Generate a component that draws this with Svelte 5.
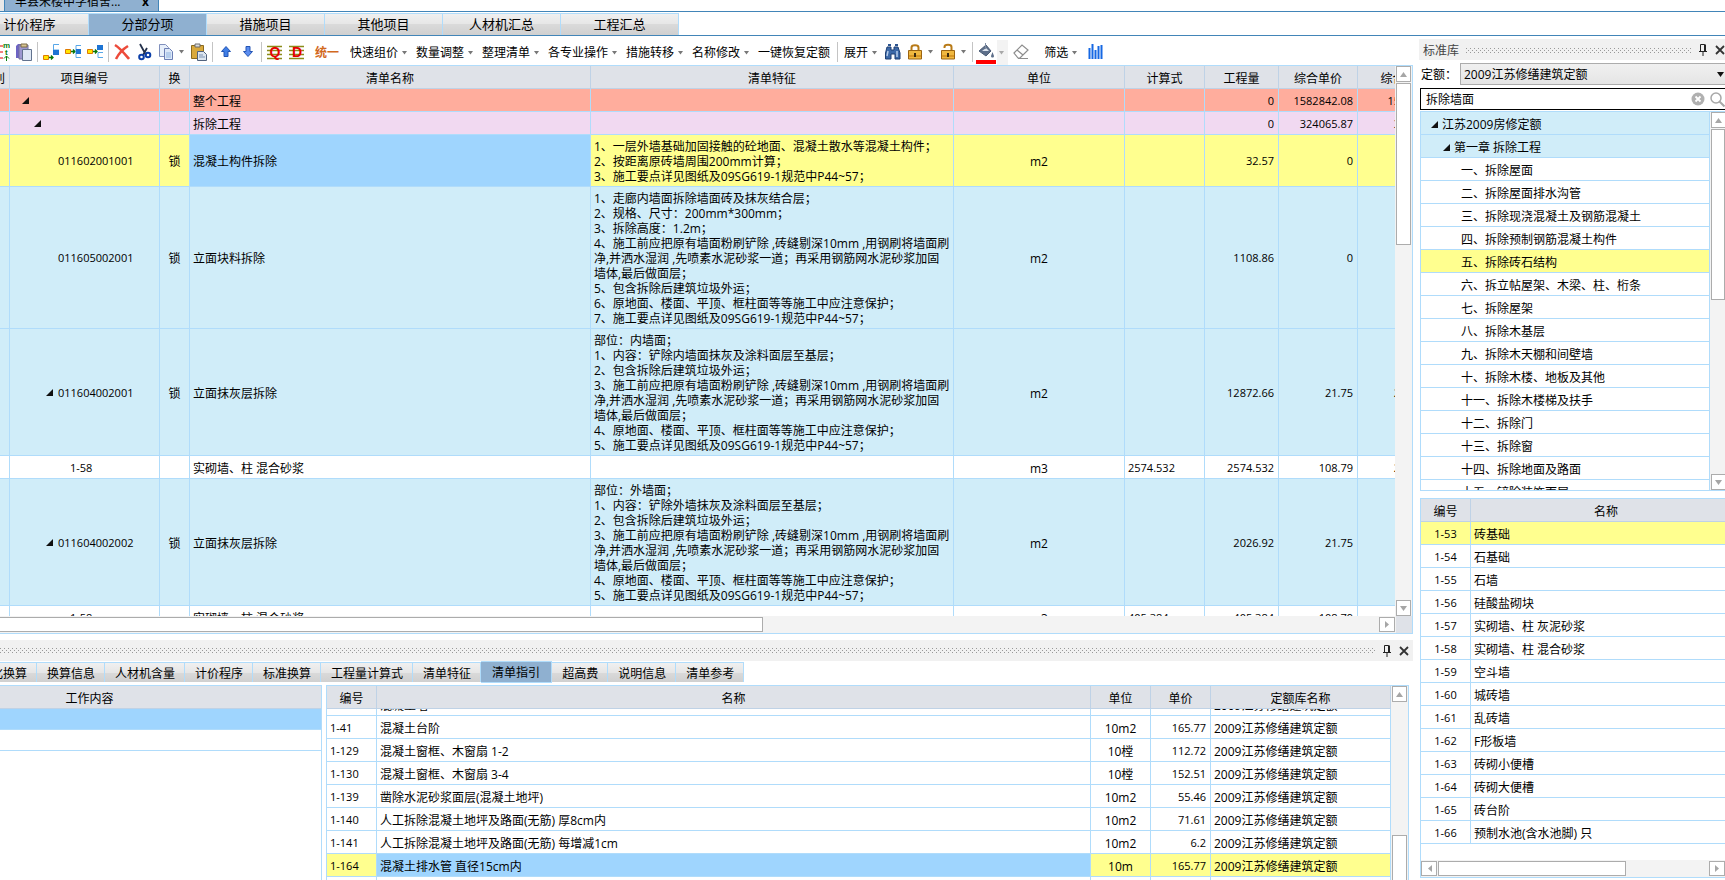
<script>
    let activeTab = $state("分部分项");
    let activeSub = $state("清单指引");
    let search = $state("拆除墙面");
    let quota = $state("2009江苏修缮建筑定额");

    const tabs = ["计价程序", "分部分项", "措施项目", "其他项目", "人材机汇总", "工程汇总"];
    const subTabs = ["优化换算", "换算信息", "人材机含量", "计价程序", "标准换算", "工程量计算式", "清单特征", "清单指引", "超高费", "说明信息", "清单参考"];

    const columns = ["类别", "项目编号", "换", "清单名称", "清单特征", "单位", "计算式", "工程量", "综合单价", "综合合价"];

    const wallSteps = (n) => `${n}、施工前应把原有墙面粉刷铲除 ,砖缝剔深10mm ,用钢刷将墙面刷
净,并洒水湿润 ,先喷素水泥砂浆一道；再采用钢筋网水泥砂浆加固
墙体,最后做面层；`;

    const rows = [
        { kind: "total", level: 0, open: true, code: "", lock: "", name: "整个工程", desc: "", unit: "", expr: "", qty: "0", price: "1582842.08", sum: "1582842.08" },
        { kind: "section", level: 1, open: true, code: "", lock: "", name: "拆除工程", desc: "", unit: "", expr: "", qty: "0", price: "324065.87", sum: "324065.87" },
        {
            kind: "current", level: 2, code: "011602001001", lock: "锁", name: "混凝土构件拆除",
            desc: `1、一层外墙基础加固接触的砼地面、混凝土散水等混凝土构件；
2、按距离原砖墙周围200mm计算；
3、施工要点详见图纸及09SG619-1规范中P44~57；`,
            unit: "m2", expr: "", qty: "32.57", price: "0", sum: "0",
        },
        {
            kind: "item", level: 2, code: "011605002001", lock: "锁", name: "立面块料拆除",
            desc: `1、走廊内墙面拆除墙面砖及抹灰结合层；
2、规格、尺寸：200mm*300mm；
3、拆除高度：1.2m；
${wallSteps(4)}
5、包含拆除后建筑垃圾外运；
6、原地面、楼面、平顶、框柱面等等施工中应注意保护；
7、施工要点详见图纸及09SG619-1规范中P44~57；`,
            unit: "m2", expr: "", qty: "1108.86", price: "0", sum: "0",
        },
        {
            kind: "item", level: 2, open: true, code: "011604002001", lock: "锁", name: "立面抹灰层拆除",
            desc: `部位：内墙面；
1、内容：铲除内墙面抹灰及涂料面层至基层；
2、包含拆除后建筑垃圾外运；
${wallSteps(3)}
4、原地面、楼面、平顶、框柱面等等施工中应注意保护；
5、施工要点详见图纸及09SG619-1规范中P44~57；`,
            unit: "m2", expr: "", qty: "12872.66", price: "21.75", sum: "279980.36",
        },
        { kind: "quota", level: 3, code: "1-58", lock: "", name: "实砌墙、柱 混合砂浆", desc: "", unit: "m3", expr: "2574.532", qty: "2574.532", price: "108.79", sum: "280083.34" },
        {
            kind: "item", level: 2, open: true, code: "011604002002", lock: "锁", name: "立面抹灰层拆除",
            desc: `部位：外墙面；
1、内容：铲除外墙抹灰及涂料面层至基层；
2、包含拆除后建筑垃圾外运；
${wallSteps(3)}
4、原地面、楼面、平顶、框柱面等等施工中应注意保护；
5、施工要点详见图纸及09SG619-1规范中P44~57；`,
            unit: "m2", expr: "", qty: "2026.92", price: "21.75", sum: "44085.51",
        },
        { kind: "quota", level: 3, code: "1-58", lock: "", name: "实砌墙、柱 混合砂浆", desc: "", unit: "m3", expr: "405.384", qty: "405.384", price: "108.79", sum: "44101.73" },
    ];

    const lib = "2009江苏修缮建筑定额";
    const guide = [
        ["", "混凝土墙", "", "", lib],
        ["1-41", "混凝土台阶", "10m2", "165.77", lib],
        ["1-129", "混凝土窗框、木窗扇 1-2", "10樘", "112.72", lib],
        ["1-130", "混凝土窗框、木窗扇 3-4", "10樘", "152.51", lib],
        ["1-139", "凿除水泥砂浆面层(混凝土地坪)", "10m2", "55.46", lib],
        ["1-140", "人工拆除混凝土地坪及路面(无筋) 厚8cm内", "10m2", "71.61", lib],
        ["1-141", "人工拆除混凝土地坪及路面(无筋) 每增减1cm", "10m2", "6.2", lib],
        ["1-164", "混凝土排水管 直径15cm内", "10m", "165.77", lib],
        ["", "", "", "", ""],
    ];

    const tree = [
        "一、拆除屋面", "二、拆除屋面排水沟管", "三、拆除现浇混凝土及钢筋混凝土",
        "四、拆除预制钢筋混凝土构件", "五、拆除砖石结构", "六、拆立帖屋架、木梁、柱、桁条",
        "七、拆除屋架", "八、拆除木基层", "九、拆除木天棚和间壁墙", "十、拆除木楼、地板及其他",
        "十一、拆除木楼梯及扶手", "十二、拆除门", "十三、拆除窗", "十四、拆除地面及路面",
        "十五、铲除装饰面层",
    ];
    let chapter = $state("五、拆除砖石结构");

    const quotas = [
        ["1-53", "砖基础"], ["1-54", "石基础"], ["1-55", "石墙"], ["1-56", "硅酸盐砌块"],
        ["1-57", "实砌墙、柱 灰泥砂浆"], ["1-58", "实砌墙、柱 混合砂浆"], ["1-59", "空斗墙"],
        ["1-60", "城砖墙"], ["1-61", "乱砖墙"], ["1-62", "F形板墙"], ["1-63", "砖砌小便槽"],
        ["1-64", "砖砌大便槽"], ["1-65", "砖台阶"], ["1-66", "预制水池(含水池脚) 只"],
    ];
    let quotaCode = $state("1-53");

    const menus = ["快速组价", "数量调整", "整理清单", "各专业操作", "措施转移", "名称修改"];
</script>

{#snippet tri()}
    <svg class="tri" width="7" height="7" viewBox="0 0 7 7"><path d="M7 0v7H0z" fill="#111" /></svg>
{/snippet}

{#snippet caret()}
    <svg class="caret" width="5" height="4" viewBox="0 0 5 4"><path d="M0 0h5L2.5 3.5z" fill="#777" /></svg>
{/snippet}

{#snippet scrollBtn(dir)}
    <button class="sb-btn" aria-label={dir}>
        <svg width="7" height="7" viewBox="0 0 7 7" fill="#a6a6a6">
            {#if dir === "up"}<path d="M0 6h7L3.5 1z" />
            {:else if dir === "down"}<path d="M0 1h7L3.5 6z" />
            {:else if dir === "left"}<path d="M6 0v7L2 3.5z" />
            {:else}<path d="M1 0v7l4-3.5z" />{/if}
        </svg>
    </button>
{/snippet}

{#snippet grip(id)}
    <svg class="grip" height="5">
        <pattern {id} width="4" height="4" patternUnits="userSpaceOnUse">
            <rect width="1" height="1" fill="#999" />
            <rect x="2" y="2" width="1" height="1" fill="#999" />
        </pattern>
        <rect width="100%" height="5" fill="url(#{id})" />
    </svg>
{/snippet}

{#snippet panelBtns()}
    <button class="flat" aria-label="固定">
        <svg width="10" height="12" viewBox="0 0 10 12" fill="none" stroke="#222"><path d="M2.5 7V.5h4V7M6.5 .5v6.500M7.500 .5v6.500M1 7.500h8M5 8v4" /></svg>
    </button>
    <button class="flat" aria-label="关闭">
        <svg width="10" height="10" viewBox="0 0 10 10" stroke="#333" stroke-width="1.8"><path d="M1 1l8 8M9 1l-8 8" /></svg>
    </button>
{/snippet}

{#snippet tool(name)}
    <button class="tool {name}" aria-label={name}>
        <svg width="16" height="20" viewBox="0 0 16 20" fill="none">
            {#if name === "sort"}
                <path d="M1 4h8M1 10h8M1 16h8" stroke="#e00000" />
                <text x="9" y="6" class="glyph-s">m</text>
                <text x="11" y="13" class="glyph-s">t</text>
                <path d="M12.5 19v-5M10 16.500l2.500-2.500 2.500 2.500" stroke="#0a800a" />
            {:else if name === "clips"}
                <path d="M0 4l2-2h3v14H0z" fill="#6d63c4" />
                <path d="M3 3h9v14H3z" fill="#9c97cf" stroke="#77719f" />
                <path d="M5 2h6v3H5z" fill="#d8c593" stroke="#7c6d46" />
                <path d="M6.500 7.500h9v11h-9z" fill="#dfe8f4" stroke="#62728e" />
            {:else if name === "insert-child"}
                <path d="M.5 13.500h5v4h-5z" fill="#ffe600" stroke="#e07b00" />
                <path d="M6 15.500h4M8 13.500l2 2-2 2" stroke="#087708" stroke-width="1.300" />
                <path d="M16 2.500h-5.500V8H16" stroke="#58a7e8" />
                <path d="M10 8h6v5h-6z" fill="#1d74d4" />
            {:else if name === "insert-before"}
                <path d="M.5 7.500h5v4h-5z" fill="#ffe600" stroke="#e07b00" />
                <path d="M6 9.500h4M8 7.500l2 2-2 2" stroke="#087708" stroke-width="1.300" />
                <path d="M16 3.500h-5v12h5" stroke="#58a7e8" />
                <path d="M11 7h5v5h-5z" fill="#1d74d4" />
            {:else if name === "insert-after"}
                <path d="M.5 7.500h5v4h-5z" fill="#ffe600" stroke="#e07b00" />
                <path d="M6 9.500h4M8 7.500l2 2-2 2" stroke="#087708" stroke-width="1.300" />
                <path d="M16 10.500h-5v5h5" stroke="#58a7e8" />
                <path d="M10 3h6v5h-6z" fill="#1d74d4" />
            {:else if name === "delete"}
                <path d="M1 3c5 3 9 8 14 14M14 4C9 7 5 11 2 17" stroke="#ed4a3a" stroke-width="2.600" />
            {:else if name === "cut"}
                <path d="M4 2l6 11M11 6l-4 7" stroke="#25324d" stroke-width="1.800" />
                <circle cx="5.500" cy="15" r="2.300" stroke="#0b3ea8" stroke-width="2" />
                <circle cx="12" cy="13" r="2.300" stroke="#0b3ea8" stroke-width="2" />
            {:else if name === "copy"}
                <path d="M1.500 2.500h6l3 3v9h-9z" fill="#e7effa" stroke="#8090bd" />
                <path d="M6.500 6.500h5l3 3v8h-8z" fill="#dce8f8" stroke="#6c7fb5" />
                <path d="M8 11h5M8 13h5M8 15h5" stroke="#8fb3e0" />
            {:else if name === "paste"}
                <path d="M.5 3.500h12v13H.5z" fill="#d9a93c" stroke="#8b6a1e" />
                <path d="M4 2h5v3H4z" fill="#dedede" stroke="#6b6b6b" />
                <path d="M6.500 9.500h6l3 3v6h-9z" fill="#dde6f0" stroke="#51627d" />
                <path d="M8 13h4M8 15h6" stroke="#7d93b3" />
            {:else if name === "up"}
                <path d="M8 4.500l4.500 5h-2.500v5H6v-5H3.500z" fill="#3f7ee6" stroke="#2455b4" />
            {:else if name === "down"}
                <path d="M8 14.500l4.500-5h-2.500v-5H6v5H3.500z" fill="#5b8df0" stroke="#2455b4" />
            {:else if name === "query" || name === "define"}
                <path d="M0 4.500h15M0 8.500h15M0 12.500h15M0 16.500h15" stroke="#8b8b1a" stroke-width="1.300" />
                <text x="8" y="15" text-anchor="middle" class="glyph-l">{name === "query" ? "Q" : "D"}</text>
            {:else if name === "find"}
                <path d="M2 5h4v3h3V5h4l2 6v6h-5v-5H6v5H.5v-6z" fill="#3c69a8" stroke="#1e3f73" />
                <path d="M3 9l-1 5M12 9v6" stroke="#b7cdea" stroke-width="1.500" />
                <path d="M3 3h3M10 3h3" stroke="#2c548f" stroke-width="2" />
            {:else if name === "lock" || name === "unlock"}
                <path d={name === "lock" ? "M4.500 9V5.500c0-3 7-3 7 0V9" : "M4.500 6V5c0-3 7-3 7 0v4"} stroke="#b87a17" stroke-width="2" />
                <path d="M1.500 8.500h13v8.500h-13z" fill="#f0b840" stroke="#9c6512" />
                <path d="M2 14h12" stroke="#d99724" stroke-width="2" />
                <path d="M7 11h2v4H7z" fill="#3a2a10" />
            {:else if name === "fill"}
                <path d="M1 9l7-6 5 6-5 5z" fill="#5d6f8a" stroke="#4d5d76" />
                <path d="M4 9l4-3 3 3z" fill="#dfe5ee" />
                <path d="M7.500 1v6" stroke="#7f8da3" />
                <path d="M14.500 10l1.500 4c0 2-3 2-3 0z" fill="#5d6f8a" />
            {:else if name === "erase"}
                <path d="M1 11l8-8 6 5-8 8H5zM4 8l6 5M5 16.500h10" stroke="#8d8d8d" stroke-width="1.200" />
            {:else if name === "stats"}
                <path d="M1.500 6v11M4.500 2v15M7.500 8v9M10.500 4v13M13.500 3v14" stroke="#1668e3" stroke-width="2" />
            {/if}
        </svg>
        {#if name === "fill"}<i class="swatch"></i>{/if}
    </button>
{/snippet}

{#snippet drop(label)}
    <button class="drop" aria-label={label}>{@render caret()}</button>
{/snippet}

{#snippet mainCols()}
    <colgroup>
        <col class="w33" /><col class="w150" /><col class="w30" /><col /><col class="w363" />
        <col class="w171" /><col class="w80" /><col class="w74" /><col class="w79" /><col class="w94" />
    </colgroup>
{/snippet}

{#snippet guideCols()}
    <colgroup>
        <col class="w50" /><col /><col class="w60" /><col class="w60" /><col class="w180" />
    </colgroup>
{/snippet}

<div class="app">
    <div class="docs">
        <span class="doc-prev"></span>
        <div class="doc">
            <span>丰县宋楼中学宿舍...</span>
            <button class="flat doc-x">x</button>
        </div>
    </div>

    <nav class="tabs">
        {#each tabs as t}
            <button class:active={activeTab === t} onclick={() => (activeTab = t)}>{t}</button>
        {/each}
    </nav>

    <div class="body">
        <main class="left">
            <div class="toolbar">
                {@render tool("sort")}
                {@render tool("clips")}
                <span class="sep"></span>
                {@render tool("insert-child")}
                {@render tool("insert-before")}
                {@render tool("insert-after")}
                <span class="sep"></span>
                {@render tool("delete")}
                {@render tool("cut")}
                {@render tool("copy")}
                {@render drop("复制选项")}
                {@render tool("paste")}
                <span class="sep"></span>
                {@render tool("up")}
                {@render tool("down")}
                <span class="sep"></span>
                {@render tool("query")}
                {@render tool("define")}
                <button class="unify">统一</button>
                {#each menus as m}
                    <button class="menu">{m}{@render caret()}</button>
                {/each}
                <button class="menu">一键恢复定额</button>
                <span class="sep"></span>
                <button class="menu">展开{@render caret()}</button>
                {@render tool("find")}
                {@render tool("lock")}
                {@render drop("锁定选项")}
                {@render tool("unlock")}
                {@render drop("解锁选项")}
                <span class="sep"></span>
                {@render tool("fill")}
                <span class="shade">{@render drop("颜色选项")}</span>
                {@render tool("erase")}
                <button class="menu filter">筛选{@render caret()}</button>
                {@render tool("stats")}
            </div>

            <section class="grid">
                <div class="pane">
                    <div class="view">
                        <table class="main">
                            {@render mainCols()}
                            <thead>
                                <tr>{#each columns as c}<th>{c}</th>{/each}</tr>
                            </thead>
                            <tbody>
                                {#each rows as r}
                                    <tr class={r.kind}>
                                        <td></td>
                                        <td class="num">
                                            <div class="code" style="padding-left: {(r.level + 1) * 12}px">
                                                <span class="slot">{#if r.open}{@render tri()}{/if}</span>{r.code}
                                            </div>
                                        </td>
                                        <td class="center">{r.lock}</td>
                                        <td class="name">{r.name}</td>
                                        <td class="desc">{r.desc}</td>
                                        <td class="center">{r.unit}</td>
                                        <td class="num">{r.expr}</td>
                                        <td class="num right">{r.qty}</td>
                                        <td class="num right">{r.price}</td>
                                        <td class="num right">{r.sum}</td>
                                    </tr>
                                {/each}
                            </tbody>
                        </table>
                    </div>
                    <div class="vbar">
                        {@render scrollBtn("up")}
                        <div class="thumb main-v"></div>
                        <span class="grow"></span>
                        {@render scrollBtn("down")}
                    </div>
                </div>
                <div class="hbar">
                    <div class="thumb main-h"></div>
                    <span class="grow"></span>
                    {@render scrollBtn("right")}
                    <span class="corner"></span>
                </div>
            </section>

            <section class="bottom">
                <div class="bar">
                    {@render grip("grip-bottom")}
                    {@render panelBtns()}
                </div>
                <nav class="subtabs">
                    {#each subTabs as t}
                        <button class:active={activeSub === t} onclick={() => (activeSub = t)}>{t}</button>
                    {/each}
                </nav>
                <div class="split">
                    <div class="work">
                        <table>
                            <thead><tr><th>工作内容</th></tr></thead>
                            <tbody>
                                <tr class="picked"><td></td></tr>
                                <tr><td></td></tr>
                            </tbody>
                        </table>
                    </div>
                    <div class="guide">
                        <div class="guide-view">
                            <table class="head">
                                {@render guideCols()}
                                <thead>
                                    <tr><th>编号</th><th>名称</th><th>单位</th><th>单价</th><th>定额库名称</th></tr>
                                </thead>
                            </table>
                            <div class="scrolled">
                                <table>
                                    {@render guideCols()}
                                    <tbody>
                                        {#each guide as g}
                                            <tr class:current={g[0] === "1-164"}>
                                                <td class="num">{g[0]}</td>
                                                <td class="name">{g[1]}</td>
                                                <td class="center">{g[2]}</td>
                                                <td class="num right">{g[3]}</td>
                                                <td>{g[4]}</td>
                                            </tr>
                                        {/each}
                                    </tbody>
                                </table>
                            </div>
                        </div>
                        <div class="vbar">
                            {@render scrollBtn("up")}
                            <span class="grow"></span>
                            <div class="thumb guide-v"></div>
                        </div>
                    </div>
                </div>
            </section>
        </main>

        <aside class="right-panel">
            <div class="bar">
                <span>标准库</span>
                {@render grip("grip-right")}
                {@render panelBtns()}
            </div>
            <div class="quota-row">
                <label for="quota">定额：</label>
                <div class="select">
                    <select id="quota" bind:value={quota}>
                        <option>2009江苏修缮建筑定额</option>
                    </select>
                    <svg width="7" height="5" viewBox="0 0 7 5"><path d="M0 0h7L3.500 5z" fill="#111" /></svg>
                </div>
            </div>
            <div class="search">
                <input type="text" aria-label="搜索" bind:value={search} />
                <button class="flat" aria-label="清除" onclick={() => (search = "")}>
                    <svg width="14" height="14" viewBox="0 0 14 14"><circle cx="7" cy="7" r="6.500" fill="#b0b0b0" /><path d="M4.500 4.500l5 5M9.500 4.500l-5 5" stroke="#fff" stroke-width="1.800" /></svg>
                </button>
                <button class="flat" aria-label="查找">
                    <svg width="15" height="15" viewBox="0 0 15 15" fill="none" stroke="#a8a8a8" stroke-width="1.500"><circle cx="6" cy="6" r="5" /><path d="M9.500 9.500l5 5" stroke-width="2" /></svg>
                </button>
            </div>
            <div class="tree">
                <ul>
                    <li class="l1">{@render tri()}江苏2009房修定额</li>
                    <li class="l2">{@render tri()}第一章 拆除工程</li>
                    {#each tree as t}
                        <li class="leaf" class:on={chapter === t}><button onclick={() => (chapter = t)}>{t}</button></li>
                    {/each}
                </ul>
                <div class="vbar wide">
                    {@render scrollBtn("up")}
                    <div class="thumb tree-v"></div>
                    <span class="grow"></span>
                    {@render scrollBtn("down")}
                </div>
            </div>
            <div class="quotas">
                <div class="quotas-view">
                    <table>
                        <colgroup><col class="w50" /><col /></colgroup>
                        <thead><tr><th>编号</th><th>名称</th></tr></thead>
                        <tbody>
                            {#each quotas as [code, name]}
                                <tr class:on={quotaCode === code} onclick={() => (quotaCode = code)}>
                                    <td class="num center">{code}</td>
                                    <td>{name}</td>
                                </tr>
                            {/each}
                        </tbody>
                    </table>
                </div>
                <div class="hbar">
                    {@render scrollBtn("left")}
                    <div class="thumb list-h"></div>
                    <span class="grow"></span>
                    {@render scrollBtn("right")}
                </div>
            </div>
        </aside>
    </div>
</div>

<style>
    :global(body) {
        margin: 0;
        background: #fff;
    }
    .app,
    button,
    input,
    select {
        font-family: "Open Sans", "Noto Sans CJK SC", sans-serif;
        font-size: 12px;
        color: #000;
    }
    .app {
        height: 100vh;
        overflow: hidden;
        display: flex;
        flex-direction: column;
        line-height: 15px;
    }
    .app * {
        box-sizing: border-box;
    }
    button {
        border: 0;
        padding: 0;
        background: none;
        line-height: 15px;
        white-space: nowrap;
        flex: none;
    }
    svg {
        display: block;
        flex: none;
    }
    .flat {
        display: flex;
        align-items: center;
    }
    .grow {
        flex: 1;
    }

    /* document tabs */
    .docs {
        display: flex;
        align-items: flex-end;
        height: 12px;
        flex: none;
        overflow: hidden;
        border-bottom: 1px solid #4285b8;
    }
    .doc-prev {
        width: 4px;
        height: 11px;
        background: #e8e8e8;
    }
    .doc {
        display: flex;
        align-items: center;
        justify-content: space-between;
        width: 155px;
        height: 20px;
        padding: 0 9px 0 10px;
        background: #8fb0d0;
        border: solid #4285b8;
        border-width: 0 1px;
    }
    .doc-x {
        font-weight: bold;
    }

    .tabs {
        display: flex;
        flex: none;
        height: 24px;
        padding-top: 1px;
        margin-left: -29px;
        border-bottom: 1px solid #4285b8;
    }
    .tabs button {
        width: 118px;
        font-size: 13px;
        border: solid #b0dcfb;
        border-width: 1px 1px 0 0;
        background: linear-gradient(#f0f0f0, #e6e6e6 50%, #dadada 50%, #d0d0d0);
    }
    .tabs button.active,
    .subtabs button.active {
        background: #8fb0d0;
    }

    .body {
        display: flex;
        flex: 1;
        min-height: 0;
        gap: 6px;
    }
    .left {
        flex: 1;
        min-width: 0;
        display: flex;
        flex-direction: column;
    }

    /* toolbar */
    .toolbar {
        display: flex;
        align-items: center;
        height: 29px;
        flex: none;
        padding-top: 3px;
        margin-left: -9px;
    }
    .tool {
        width: 22px;
        padding: 0 3px;
    }
    .sep {
        width: 1px;
        height: 20px;
        margin: 0 2px;
        background: #c4c4c4;
        flex: none;
    }
    .drop {
        width: 11px;
        height: 22px;
        padding-left: 2px;
    }
    .shade {
        background: #f3f3f3;
        margin-right: 2px;
    }
    .shade .drop {
        padding-top: 4px;
        opacity: 0.6;
    }
    .menu {
        display: flex;
        align-items: center;
        gap: 4px;
        padding: 1px 5px 0 4px;
    }
    .filter {
        margin: 0 3px 0 8px;
    }
    .unify {
        width: 38px;
        color: #d2691e;
        font-weight: bold;
    }
    .fill {
        position: relative;
    }
    .swatch {
        position: absolute;
        left: 1px;
        right: 1px;
        bottom: -2px;
        height: 4px;
        background: #f00;
    }
    .glyph-s {
        font: bold 8px "Liberation Sans", sans-serif;
        fill: #0a800a;
    }
    .glyph-l {
        font: bold 14px "Liberation Sans", sans-serif;
        fill: #e60000;
    }

    /* tables */
    table {
        table-layout: fixed;
        border-collapse: separate;
        border-spacing: 0;
        width: 100%;
    }
    th,
    td {
        height: 23px;
        padding: 4px 3px 2px;
        border: solid #b0dcfb;
        border-width: 0 1px 1px 0;
        white-space: nowrap;
        overflow: hidden;
    }
    th {
        background: #dfe2e8;
        border-color: #bfd2e6;
        font-weight: normal;
    }
    .num {
        padding-top: 3px;
        padding-bottom: 3px;
        font-size: 11px;
    }
    .center {
        text-align: center;
    }
    .right {
        padding-right: 4px;
        text-align: right;
    }
    .desc {
        white-space: pre;
    }
    .w30 { width: 30px; }
    .w33 { width: 33px; }
    .w50 { width: 50px; }
    .w60 { width: 60px; }
    .w74 { width: 74px; }
    .w79 { width: 79px; }
    .w80 { width: 80px; }
    .w94 { width: 94px; }
    .w150 { width: 150px; }
    .w171 { width: 171px; }
    .w180 { width: 180px; }
    .w363 { width: 363px; }

    .total td { background: #ffad9d; }
    .section td { background: #f1d9f1; }
    .item td { background: #d0edf9; }
    .current td,
    .on td { background: #ffff8f; }
    .current .name,
    .picked td { background: #9fd5fe; }

    .grid {
        flex: 1;
        min-height: 0;
        display: flex;
        flex-direction: column;
        border: solid #b0dcfb;
        border-width: 1px 1px 1px 0;
    }
    .pane {
        display: flex;
        flex: 1;
        min-height: 0;
    }
    .view {
        flex: 1;
        min-width: 0;
        overflow: hidden;
    }
    .main {
        width: calc(100% + 80px);
        margin-left: -23px;
    }
    .main td:nth-child(2) {
        padding-left: 0;
    }
    .code {
        display: flex;
        align-items: center;
    }
    .slot {
        width: 12px;
    }

    /* scroll bars */
    .vbar {
        display: flex;
        flex-direction: column;
        width: 17px;
        padding: 0 1px;
        gap: 1px;
        background: #f3f3f3;
        flex: none;
    }
    .hbar {
        display: flex;
        height: 17px;
        padding: 1px 0;
        gap: 1px;
        background: #f3f3f3;
        flex: none;
    }
    .sb-btn {
        display: flex;
        align-items: center;
        justify-content: center;
        width: 15px;
        height: 16px;
        border: 1px solid #acacac;
        background: #fff;
    }
    .hbar .sb-btn {
        height: 15px;
        width: 16px;
    }
    .thumb {
        background: #fff;
        border: 1px solid #acacac;
    }
    .main-v { height: 162px; }
    .main-h {
        width: 763px;
        border-left: 0;
    }
    .guide-v {
        height: 45px;
        border-bottom: 0;
    }
    .tree-v { height: 171px; }
    .list-h { width: 188px; }
    .corner {
        width: 16px;
        margin: -1px 0;
        background: #dfe2e8;
    }

    /* bottom panel */
    .bottom {
        height: 246px;
        flex: none;
        padding-top: 6px;
        overflow: hidden;
    }
    .bar {
        display: flex;
        align-items: center;
        gap: 7px;
        height: 21px;
        padding: 1px 0 0 4px;
        background: #f1f1f1;
        color: #444;
        flex: none;
    }
    .bottom .bar {
        padding: 0 4px 0 0;
    }
    .grip {
        flex: 1;
        min-width: 0;
    }
    .subtabs {
        display: flex;
        align-items: center;
        height: 22px;
        margin-left: -31px;
    }
    .subtabs button {
        height: 20px;
        padding: 1px 9px 0 10px;
        border: solid #b0dcfb;
        border-width: 1px 1px 0 0;
        background: linear-gradient(#f0f0f0, #e6e6e6 50%, #dadada 50%, #d0d0d0);
    }
    .subtabs button.active {
        height: 22px;
        padding: 0 11px;
        border-bottom-width: 1px;
    }
    .split {
        display: flex;
        gap: 4px;
        padding: 2px 4px 0 0;
        height: 197px;
    }
    .work {
        width: 322px;
        flex: none;
        overflow: hidden;
        border: solid #b0dcfb;
        border-width: 1px 1px 0 0;
    }
    .work table {
        width: 464px;
        margin-left: -142px;
    }
    .work td {
        height: 21px;
    }
    .guide {
        display: flex;
        flex: 1;
        min-width: 0;
        border: solid #b0dcfb;
        border-width: 1px 1px 0 1px;
    }
    .guide-view {
        flex: 1;
        min-width: 0;
        overflow: hidden;
    }
    .scrolled {
        overflow: hidden;
    }
    .scrolled table {
        margin-top: -16px;
    }

    /* library panel */
    .right-panel {
        display: flex;
        flex-direction: column;
        width: 306px;
        flex: none;
        padding: 3px 0 2px;
    }
    .quota-row {
        display: flex;
        align-items: center;
        justify-content: space-between;
        height: 22px;
        margin: 3px 0;
        padding-left: 2px;
    }
    .select {
        display: flex;
        align-items: center;
        width: 265px;
        height: 22px;
        padding-right: 1px;
        border: solid #acacac;
        border-width: 1px 0 1px 1px;
        background: linear-gradient(#f0f0f0, #e5e5e5);
    }
    select {
        appearance: none;
        flex: 1;
        padding: 0 3px;
        border: 0;
        background: none;
    }
    .search {
        display: flex;
        align-items: center;
        gap: 5px;
        height: 22px;
        margin-left: 1px;
        border: solid #000;
        border-width: 1px 0 1px 1px;
    }
    .search input {
        flex: 1;
        min-width: 0;
        height: 18px;
        padding: 0 5px;
        border: 0;
        outline: 0;
    }
    .tree {
        display: flex;
        height: 380px;
        margin: 1px 0 7px 1px;
        border: solid #b0dcfb;
        border-width: 1px 0 1px 1px;
        flex: none;
    }
    ul {
        flex: 1;
        margin: 0;
        padding: 0;
        list-style: none;
        overflow: hidden;
        border-right: 1px solid #b0dcfb;
    }
    li {
        display: flex;
        align-items: center;
        gap: 4px;
        height: 23px;
        padding-top: 2px;
        border-bottom: 1px solid #b0dcfb;
    }
    .l1,
    .l2 { background: #d0edf9; }
    .l1 { padding-left: 10px; }
    .l2 { padding-left: 22px; }
    .leaf { padding-left: 40px; }
    .leaf.on { background: #ffff8f; }
    .vbar.wide {
        width: 15px;
        padding-right: 0;
    }
    .quotas {
        display: flex;
        flex-direction: column;
        flex: 1;
        min-height: 0;
        margin-left: 1px;
        border: solid #b0dcfb;
        border-width: 1px 0 1px 1px;
    }
    .quotas-view {
        flex: 1;
        min-height: 0;
        overflow: hidden;
    }
    .quotas table {
        width: calc(100% + 17px);
    }
</style>
